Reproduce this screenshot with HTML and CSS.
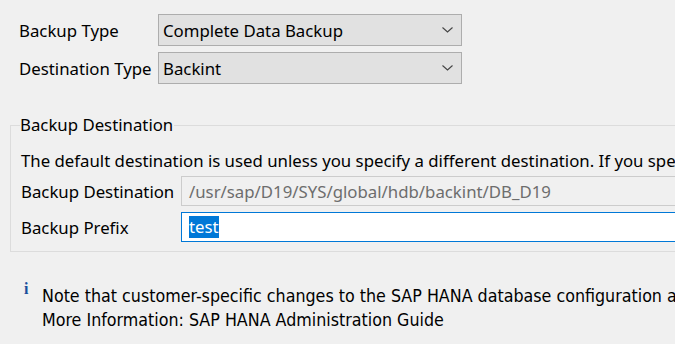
FILE: index.html
```html
<!DOCTYPE html>
<html lang="en">
<head>
  <meta charset="UTF-8">
  <title>Backup Settings</title>
  <link rel="stylesheet" href="styles.css">
</head>
<body>
  <!-- backup type / destination type -->
  <div class="type-form">
    <label class="lbl">Backup Type</label>
    <div class="combo">
      <span>Complete Data Backup</span>
      <svg class="chev" width="11" height="6" viewBox="0 0 11 6"><path d="M0.5 0.5 L5.5 5 L10.5 0.5" fill="none" stroke="#444" stroke-width="1.1"/></svg>
    </div>
    <label class="lbl">Destination Type</label>
    <div class="combo">
      <span>Backint</span>
      <svg class="chev" width="11" height="6" viewBox="0 0 11 6"><path d="M0.5 0.5 L5.5 5 L10.5 0.5" fill="none" stroke="#444" stroke-width="1.1"/></svg>
    </div>
  </div>

  <!-- backup destination group -->
  <fieldset class="group">
    <legend>Backup Destination</legend>
    <p class="desc">The default destination is used unless you specify a different destination. If you specify a different destination, make sure it exists.</p>
    <div class="dest-form">
      <label class="lbl">Backup Destination</label>
      <div class="field disabled">/usr/sap/D19/SYS/global/hdb/backint/DB_D19</div>
      <label class="lbl">Backup Prefix</label>
      <div class="field focus"><span class="sel">test</span></div>
    </div>
  </fieldset>

  <!-- note -->
  <div class="note">
    <span class="info">i</span>
    <p>Note that customer-specific changes to the SAP HANA database configuration are not backed up.<br>
    More Information: SAP HANA Administration Guide</p>
  </div>
</body>
</html>
```

FILE: styles.css
```css
* {
  box-sizing: border-box;
  margin: 0;
  padding: 0;
}

html, body {
  width: 675px;
  height: 344px;
  overflow: hidden;
  background: #f0f0f0;
  color: #000;
  font-family: "Noto Sans", "Open Sans", sans-serif;
  font-size: 16.8px;
}

/* ======= top form ======= */
.type-form {
  display: grid;
  grid-template-columns: 139px 304px;
  row-gap: 6px;
  padding: 14px 0 0 19px;
  align-items: center;
}
.lbl {
  white-space: nowrap;
}
.combo {
  height: 32px;
  background: #e1e1e1;
  border: 1px solid #adadad;
  display: flex;
  align-items: center;
  justify-content: space-between;
  padding: 0 8px 0 4px;
}
.chev {
  display: block;
}

/* ======= group box ======= */
.group {
  margin: 30px 0 0 10px;
  width: 900px;
  border: 1px solid #dcdcdc;
  padding: 0 0 9px 10px;
}
.group legend {
  padding: 0 1px 0 0;
  margin-left: -1px;
  line-height: 22px;
}
.desc {
  white-space: nowrap;
  line-height: 24px;
  margin-top: 13px;
}
.dest-form {
  display: grid;
  grid-template-columns: 160px 1fr;
  row-gap: 6px;
  margin-top: 3px;
  align-items: center;
}
.field {
  height: 30px;
  display: flex;
  align-items: center;
  padding: 0 7px;
  white-space: nowrap;
}
.field.disabled {
  background: #f0f0f0;
  border: 1px solid #cccccc;
  color: #6d6d6d;
}
.field.focus {
  background: #fff;
  border: 1px solid #0078d7;
}
.sel {
  background: #0078d7;
  color: #fff;
  line-height: 22px;
}

/* ======= note ======= */
.note {
  display: flex;
  margin: 32px 0 0 24px;
}
.info {
  flex-shrink: 0;
  width: 18px;
  color: #1a4f9c;
  font-family: "Liberation Serif", serif;
  font-weight: bold;
  font-size: 16px;
  line-height: 10px;
}
.note p {
  font-family: "DejaVu Sans Condensed", "DejaVu Sans", sans-serif;
  font-size: 17.7px;
  line-height: 24px;
  white-space: nowrap;
}
```
